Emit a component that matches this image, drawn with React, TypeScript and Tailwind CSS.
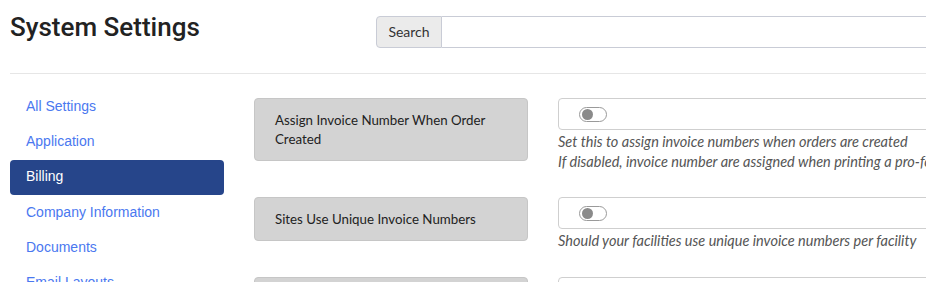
import React from "react";

const nav = ["All Settings", "Application", "Billing", "Company Information", "Documents", "Email Layouts"];

function Toggle() {
  return (
    <span className="flex h-[15px] w-[28px] items-center rounded-full border border-[#9a9a9a] bg-white px-[2px]">
      <span className="h-[11px] w-[11px] rounded-full bg-[#8a8a8a]" />
    </span>
  );
}

function Row({ label, help }: { label: string; help: string[] }) {
  return (
    <div className="mb-[36px] flex items-start gap-[30px]">
      <div className="w-[274px] shrink-0 rounded-[4px] border border-[#c6c6c6] bg-[#d3d3d3] px-[20px] pb-[11px] pt-[12px] text-[13.3px] leading-[19px] text-[#222]">
        {label}
      </div>
      <div className="-mb-[11px] min-w-0 flex-1">
        <div className="flex h-[32px] w-[420px] items-center rounded-[4px] border border-[#cfcfcf] bg-white pl-[20px]">
          <Toggle />
        </div>
        <div className="mt-[2px] whitespace-nowrap text-[14.5px] italic leading-[20px] text-[#555]">
          {help.map((h) => (
            <div key={h}>{h}</div>
          ))}
        </div>
      </div>
    </div>
  );
}

export default function App() {
  return (
    <div className="h-[282px] w-[926px] overflow-hidden bg-white" style={{ fontFamily: "Lato, 'Open Sans', sans-serif" }}>
      <div className="flex items-start px-[10px] pt-[16px]">
        <h1 className="-mt-[2px] w-[366px] shrink-0 text-[26px] font-medium leading-[26px] text-[#222]" style={{ fontFamily: "Roboto, sans-serif" }}>
          System Settings
        </h1>
        <div className="flex h-[32px] w-[600px] shrink-0">
          <div className="flex w-[66px] items-center justify-center rounded-l-[4px] border border-[#c9ccd6] bg-[#ebebeb] pb-[2px] text-[14px] text-[#333]">
            Search
          </div>
          <div className="flex-1 border-y border-r border-[#c9ccd6] bg-white" />
        </div>
      </div>
      <div className="ml-[10px] mt-[25px] h-px bg-[#e6e6e6]" />
      <div className="flex pl-[10px] pt-[15px]">
        <div className="w-[214px] shrink-0" style={{ fontFamily: "'Liberation Sans', Arial, sans-serif" }}>
          {nav.map((n) => (
            <div
              key={n}
              className={
                n === "Billing"
                  ? "mt-px flex h-[35px] items-center rounded-[4px] bg-[#26458a] px-[16px] pb-[2px] text-[14px] text-white"
                  : "flex h-[35px] items-center px-[16px] pb-[1px] text-[14px] text-[#4a78f0]"
              }
            >
              {n}
            </div>
          ))}
        </div>
        <div className="ml-[30px] flex-1 pt-[9px]">
          <Row
            label="Assign Invoice Number When Order Created"
            help={[
              "Set this to assign invoice numbers when orders are created",
              "If disabled, invoice number are assigned when printing a pro-forma invoice",
            ]}
          />
          <Row label="Sites Use Unique Invoice Numbers" help={["Should your facilities use unique invoice numbers per facility"]} />
          <Row label="Next Invoice Number" help={["The next invoice number"]} />
        </div>
      </div>
    </div>
  );
}
